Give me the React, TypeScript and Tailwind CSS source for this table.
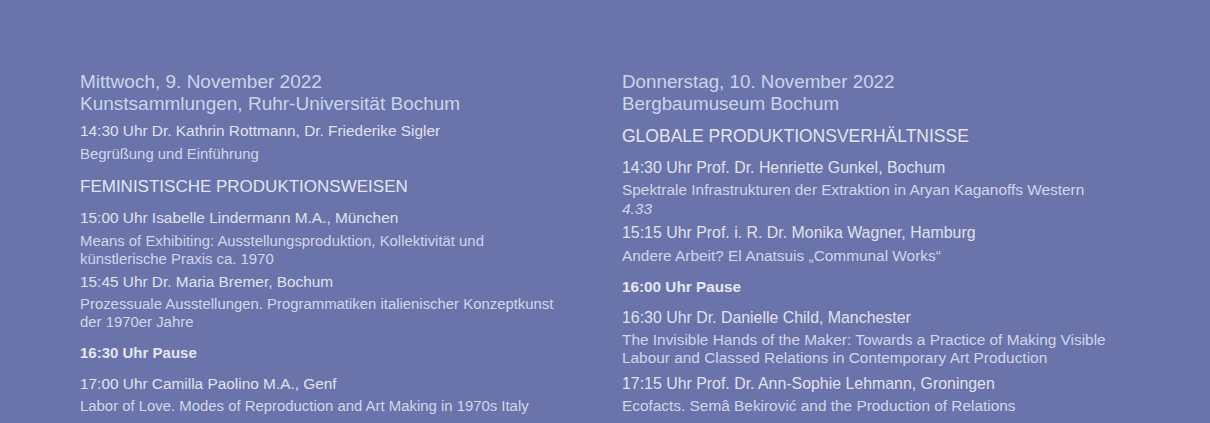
import React from "react";

const font = { fontFamily: '"Liberation Sans", Arial, Helvetica, sans-serif' };

type P = { children: React.ReactNode; mt: string; cls: string };

function Date({ l1, l2, cls }: { l1: string; l2: string; cls: string }) {
  return (
    <div className={`leading-[22px] text-[#cad5ea] whitespace-nowrap ${cls}`}>
      <div>{l1}</div>
      <div>{l2}</div>
    </div>
  );
}

function Heading({ children, mt, cls }: P) {
  return <div className={`leading-[22px] text-[#e2e5f1] whitespace-nowrap ${cls} ${mt}`}>{children}</div>;
}

function Speaker({ children, mt, cls }: P) {
  return <div className={`leading-[22px] text-[#e0e2ee] whitespace-nowrap ${cls} ${mt}`}>{children}</div>;
}

function Desc({ children, mt, cls }: P) {
  return <div className={`leading-[18.5px] text-[#d2d6ea] whitespace-nowrap ${cls} ${mt}`}>{children}</div>;
}

function Pause({ children, mt, cls }: P) {
  return <div className={`leading-[22px] font-bold text-[#e4e6f1] whitespace-nowrap ${cls} ${mt}`}>{children}</div>;
}

export default function App() {
  const L = { d: "text-[19px]", h: "text-[17px]", s: "text-[15.4px]", x: "text-[14.9px]", p: "text-[15px]" };
  const R = { d: "text-[18.8px]", h: "text-[17.5px]", s: "text-[15.9px]", x: "text-[15.4px]", p: "text-[15.3px]" };
  return (
    <div className="w-[1210px] h-[423px] overflow-hidden bg-[#6a74ab]" style={font}>
      <div className="flex pt-[71px]">
        <div className="w-[542px] shrink-0 pl-[80px]">
          <Date cls={L.d} l1="Mittwoch, 9. November 2022" l2="Kunstsammlungen, Ruhr-Universität Bochum" />
          <Speaker cls={L.s} mt="mt-[5px]">14:30 Uhr Dr. Kathrin Rottmann, Dr. Friederike Sigler</Speaker>
          <Desc cls={L.x} mt="mt-[3px]">Begrüßung und Einführung</Desc>
          <Heading cls={L.h} mt="mt-[12px]">FEMINISTISCHE PRODUKTIONSWEISEN</Heading>
          <Speaker cls={L.s} mt="mt-[9px]">15:00 Uhr Isabelle Lindermann M.A., München</Speaker>
          <Desc cls={L.x} mt="mt-[3px]">
            Means of Exhibiting: Ausstellungsproduktion, Kollektivität und
            <br />
            künstlerische Praxis ca. 1970
          </Desc>
          <Speaker cls={L.s} mt="mt-[2px]">15:45 Uhr Dr. Maria Bremer, Bochum</Speaker>
          <Desc cls={L.x} mt="mt-[2px]">
            Prozessuale Ausstellungen. Programmatiken italienischer Konzeptkunst
            <br />
            der 1970er Jahre
          </Desc>
          <Pause cls={L.p} mt="mt-[10px]">16:30 Uhr Pause</Pause>
          <Speaker cls={L.s} mt="mt-[9px]">17:00 Uhr Camilla Paolino M.A., Genf</Speaker>
          <Desc cls={L.x} mt="mt-[2px]">Labor of Love. Modes of Reproduction and Art Making in 1970s Italy</Desc>
        </div>
        <div className="flex-1 pl-[80px]">
          <Date cls={R.d} l1="Donnerstag, 10. November 2022" l2="Bergbaumuseum Bochum" />
          <Heading cls={R.h} mt="mt-[10px]">GLOBALE PRODUKTIONSVERHÄLTNISSE</Heading>
          <Speaker cls={R.s} mt="mt-[10px]">14:30 Uhr Prof. Dr. Henriette Gunkel, Bochum</Speaker>
          <Desc cls={R.x} mt="mt-[2px]">
            Spektrale Infrastrukturen der Extraktion in Aryan Kaganoffs Western
            <br />
            <span className="italic">4.33</span>
          </Desc>
          <Speaker cls={R.s} mt="mt-[4px]">15:15 Uhr Prof. i. R. Dr. Monika Wagner, Hamburg</Speaker>
          <Desc cls={R.x} mt="mt-[3px]">Andere Arbeit? El Anatsuis „Communal Works“</Desc>
          <Pause cls={R.p} mt="mt-[10px]">16:00 Uhr Pause</Pause>
          <Speaker cls={R.s} mt="mt-[9px]">16:30 Uhr Dr. Danielle Child, Manchester</Speaker>
          <Desc cls={R.x} mt="mt-[2px]">
            The Invisible Hands of the Maker: Towards a Practice of Making Visible
            <br />
            Labour and Classed Relations in Contemporary Art Production
          </Desc>
          <Speaker cls={R.s} mt="mt-[5px]">17:15 Uhr Prof. Dr. Ann-Sophie Lehmann, Groningen</Speaker>
          <Desc cls={R.x} mt="mt-[2px]">Ecofacts. Semâ Bekirović and the Production of Relations</Desc>
        </div>
      </div>
    </div>
  );
}
